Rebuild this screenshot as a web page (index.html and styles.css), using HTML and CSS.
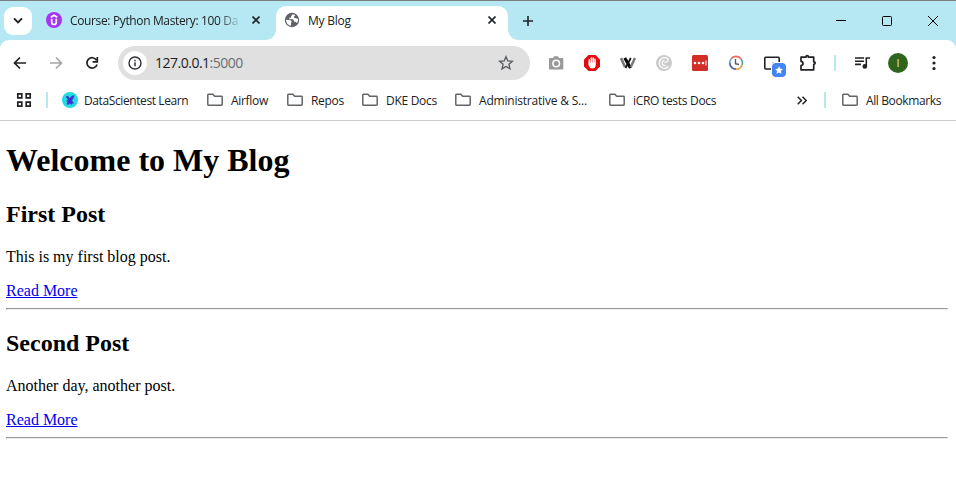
FILE: index.html
```html
<!DOCTYPE html>
<html lang="en">
<head>
<meta charset="utf-8">
<title>My Blog</title>
<link rel="stylesheet" href="styles.css">
</head>
<body>
<svg class="defs" width="0" height="0">
  <symbol id="folder" viewBox="0 0 16 14"><path d="M1.500 12.200q-.7 0-.7-.7v-9.500q0-.7.7-.7h4.300l1.900 2h6.800q.7 0 .7.7v7.500q0 .7-.7.7z" fill="none" stroke="#626568" stroke-width="1.500"/></symbol>
  <symbol id="close" viewBox="0 0 8 8"><path d="M.5.5l7 7M7.500.5l-7 7" stroke="#202429" stroke-width="1.600"/></symbol>
</svg>
<header class="chrome">
  <div class="tabstrip">
    <button class="search"><svg width="10" height="7" viewBox="0 0 10 7"><path d="M1 1.300l4 4 4-4" fill="none" stroke="#202124" stroke-width="1.900"/></svg></button>
    <div class="tab">
      <svg width="16" height="16" viewBox="0 0 16 16"><circle cx="8" cy="8" r="8" fill="#a435f0"/><path d="M4.800 5.200L8 3.200l3.200 2M5.700 6.700v3.500a2.300 2.300 0 0 0 4.600 0V6.700" fill="none" stroke="#fff" stroke-width="1.700"/></svg>
      <span class="title faded">Course: Python Mastery: 100 Da</span>
      <svg class="x" width="8" height="8"><use href="#close"/></svg>
    </div>
    <div class="tab active">
      <svg width="16" height="16" viewBox="0 0 16 16"><circle cx="8" cy="8" r="7.200" fill="#5f6368"/><path d="M8.500 2.300L7 4.400v1.300H5.300v1.500h3.500l1.200 1.500v1h1.500l1.600 1.200A6 6 0 0 0 14 7l-1.800-.8-2-.2V4.300l1.300-1.200zM2.100 7.800l4.500.4 1.200 1.500-.8 1.400v2.700A6 6 0 0 1 2.100 7.800z" fill="#fff"/></svg>
      <span class="title">My Blog</span>
      <svg class="x" width="8" height="8"><use href="#close"/></svg>
    </div>
    <svg class="plus" width="10" height="10" viewBox="0 0 10 10"><path d="M5 0v10M0 5h10" stroke="#202429" stroke-width="1.600"/></svg>
    <div class="controls">
      <svg width="10" height="10" viewBox="0 0 10 10"><path d="M0 4.500h10" stroke="#000"/></svg>
      <svg width="10" height="10" viewBox="0 0 10 10"><rect x=".5" y=".5" width="9" height="9" rx="1" fill="none" stroke="#000"/></svg>
      <svg width="10" height="10" viewBox="0 0 10 10"><path d="M0 0l10 10M10 0L0 10" stroke="#000"/></svg>
    </div>
  </div>
  <div class="toolbar">
    <span class="slot"><svg width="14" height="14" viewBox="0 0 14 14"><path d="M13 7H2M7 1.500L1.500 7 7 12.500" fill="none" stroke="#202124" stroke-width="1.700"/></svg></span>
    <span class="slot"><svg width="14" height="14" viewBox="0 0 14 14"><path d="M1 7h11M7 1.500L12.500 7 7 12.500" fill="none" stroke="#a3a5a8" stroke-width="1.600"/></svg></span>
    <span class="slot"><svg width="14" height="14" viewBox="0 0 14 14"><path d="M11.600 4.200A5.200 5.200 0 1 0 12.100 8.500" fill="none" stroke="#202124" stroke-width="1.700"/><path d="M12.300 1v4.900H7.600" fill="none" stroke="#202124" stroke-width="1.700"/></svg></span>
    <div class="omnibox">
      <span class="info"><svg width="14" height="14" viewBox="0 0 14 14"><circle cx="7" cy="7" r="6" fill="none" stroke="#303236" stroke-width="1.400"/><path d="M7 6.200v4M7 3.700v1.500" stroke="#303236" stroke-width="1.500"/></svg></span>
      <span class="url">127.0.0.1<span>:5000</span></span>
      <svg class="star" width="16" height="16" viewBox="0 0 16 16"><path d="M8 1.700l1.800 4.200 4.600.4-3.500 3 1.100 4.500L8 11.400l-4 2.400 1.100-4.500-3.500-3 4.600-.4z" fill="none" stroke="#55585c" stroke-width="1.300"/></svg>
    </div>
    <span class="slot"><svg width="16" height="16" viewBox="0 0 16 16"><path d="M1 4q0-1 1-1h3l1-1.700h4L11 3h3.300q1 0 1 1v9.500q0 1-1 1H2q-1 0-1-1z" fill="#999"/><circle cx="8.200" cy="8.500" r="3.300" fill="none" stroke="#fff" stroke-width="1.600"/></svg></span>
    <span class="slot"><svg width="18" height="18" viewBox="0 0 18 18"><path d="M5.500 1h7L17 5.500v7L12.500 17h-7L1 12.500v-7z" fill="#e30b0f"/><path d="M6.300 10V5.800M8.300 9V4M10.200 9V4M12 10V5.300" stroke="#fff" stroke-width="1.500" stroke-linecap="round"/><path d="M5.600 8.500h7.100v2.500q0 3.500-3.500 3.500-2.500 0-3.600-3z" fill="#fff"/></svg></span>
    <span class="slot"><svg width="16" height="12" viewBox="0 0 16 12"><path d="M1 1l4 9" stroke="#777" stroke-width="2.600"/><path d="M4.800 1l5.700 10" stroke="#000" stroke-width="3"/><path d="M10.800 1L5.500 11" stroke="#111" stroke-width="1.800"/><path d="M15 1l-4.200 9" stroke="#777" stroke-width="2.500"/></svg></span>
    <span class="slot"><svg width="16" height="16" viewBox="0 0 16 16"><circle cx="8" cy="8" r="8" fill="#cbcbcb"/><path d="M12.500 11.500a5.300 5.300 0 1 1-.5-7.500q.8 3-3.500 3.300M8.300 5.200q-2.500 1-2 3.400t3.500 2" fill="none" stroke="#fff" stroke-width="1.200"/></svg></span>
    <span class="slot"><svg width="16" height="16" viewBox="0 0 16 16"><rect width="16" height="16" rx="1.500" fill="#d32d27"/><g fill="#fff"><circle cx="3" cy="8" r="1.300"/><circle cx="7" cy="8" r="1.300"/><circle cx="11" cy="8" r="1.300"/><path d="M13.500 5.500h1v5h-1z"/></g></svg></span>
    <span class="slot"><svg width="16" height="16" viewBox="0 0 16 16" fill="none" stroke-width="1.700"><path d="M3 4A6.200 6.200 0 0 1 13 4" stroke="#ea6a5a"/><path d="M13 4a6.200 6.200 0 0 1 1 6" stroke="#58a891"/><path d="M14 10A6.200 6.200 0 0 1 8 14.200" stroke="#e9a03c"/><path d="M8 14.200A6.200 6.200 0 0 1 1.800 8" stroke="#4f5fa8"/><path d="M1.800 8A6.200 6.200 0 0 1 3 4" stroke="#6ca9df"/><path d="M7.500 4v4.700l3.500.8" stroke="#555" stroke-width="1.300"/></svg></span>
    <span class="slot cast"><svg width="16" height="14" viewBox="0 0 16 14"><rect x=".8" y="1.300" width="14.400" height="11.700" rx="1" fill="none" stroke="#202124" stroke-width="1.600"/><path d="M8 7h2" stroke="#777"/></svg><svg class="badge" width="14" height="14" viewBox="0 0 14 14"><rect width="14" height="14" rx="3" fill="#4285f4"/><path d="M7 3.200l1.200 2.600 2.800.3-2.100 1.900.6 2.800L7 9.400l-2.500 1.400.6-2.800L3 6.100l2.800-.3z" fill="#fff"/></svg></span>
    <span class="slot"><svg width="18" height="18" viewBox="0 0 18 18"><path d="M2 3.200h5q0-1.500 1.200-1.500t1.200 1.500h5.300v4.600q1.500 0 1.500 1.300t-1.500 1.300v5.400H2v-4.300q2-.3 2-2.100T2 7.300z" fill="none" stroke="#202124" stroke-width="1.700" stroke-linejoin="round"/></svg></span>
    <i class="rule"></i>
    <span class="slot"><svg width="16" height="14" viewBox="0 0 16 14"><path d="M1 2h9M1 5.200h9M1 8.400h6M12.300 10.500V2H16" fill="none" stroke="#202124" stroke-width="1.600"/><circle cx="10.800" cy="10.400" r="2.300" fill="#202124"/></svg></span>
    <span class="slot"><span class="avatar">I</span></span>
    <span class="slot"><svg width="4" height="16" viewBox="0 0 4 16" fill="#202124"><circle cx="2" cy="2.500" r="1.600"/><circle cx="2" cy="8" r="1.600"/><circle cx="2" cy="13.500" r="1.600"/></svg></span>
  </div>
  <nav class="bookmarks">
    <svg class="apps" width="16" height="16" viewBox="0 0 16 16"><path d="M1.800 1.800h4v4h-4zM10.200 1.800h4v4h-4zM1.800 10.200h4v4h-4zM10.200 10.200h4v4h-4z" fill="none" stroke="#202124" stroke-width="1.700"/></svg>
    <i class="rule"></i>
    <a class="mark first"><svg width="16" height="16" viewBox="0 0 16 16"><circle cx="8" cy="8" r="8" fill="#24dbe2"/><path d="M3.800 4.500l2-.8 1.700 2.500L9.500 4l2.800-.7-.8 3-1.500 2 2 3.500-2-.3-.5 1.700-1.500-2-1.200 1.500-2.300-.5 1.200-2.400L4 9.300l1.800-1.500z" fill="#4030d8"/></svg><span>DataScientest Learn</span></a>
    <a class="mark airflow"><svg width="16" height="14"><use href="#folder"/></svg><span>Airflow</span></a>
    <a class="mark repos"><svg width="16" height="14"><use href="#folder"/></svg><span>Repos</span></a>
    <a class="mark dke"><svg width="16" height="14"><use href="#folder"/></svg><span>DKE Docs</span></a>
    <a class="mark admin"><svg width="16" height="14"><use href="#folder"/></svg><span>Administrative &amp; S...</span></a>
    <a class="mark icro"><svg width="16" height="14"><use href="#folder"/></svg><span>iCRO tests Docs</span></a>
    <svg class="more" width="10" height="9" viewBox="0 0 10 9"><path d="M.7.8l3.700 3.700L.7 8.200M5.500.8l3.700 3.700-3.700 3.700" fill="none" stroke="#202124" stroke-width="1.500"/></svg>
    <i class="rule"></i>
    <a class="mark all"><svg width="16" height="14"><use href="#folder"/></svg><span>All Bookmarks</span></a>
  </nav>
</header>
<main class="page">
  <h1>Welcome to My Blog</h1>
  <h2>First Post</h2>
  <p>This is my first blog post.</p>
  <a href="#first">Read More</a>
  <hr>
  <h2>Second Post</h2>
  <p>Another day, another post.</p>
  <a href="#second">Read More</a>
  <hr>
</main>
</body>
</html>
```
FILE: styles.css
```css
body { margin: 0; background: #fff; overflow: hidden; }
.defs { display: none; }
.chrome {
  box-sizing: border-box;
  height: 121px;
  border-top: 1px solid #7b7f82;
  border-bottom: 1px solid #cbcbcb;
  background: #b5e8f3;
  font: 12px "Open Sans", "Noto Sans", sans-serif;
  color: #202124;
  white-space: nowrap;
}
.chrome svg { flex: none; display: block; }
.tabstrip { display: flex; align-items: center; height: 39px; }
.search {
  display: flex; align-items: center; justify-content: center;
  width: 28px; height: 28px; margin-left: 4px; padding: 0;
  border: 0; border-radius: 9px; background: #fff;
}
.tab {
  position: relative; box-sizing: border-box;
  display: flex; align-items: center;
  width: 230px; height: 34px; margin: 5px 0 0 10px; padding: 0 12px 6px 4px;
}
.tab.active { width: 232px; margin-left: 4px; padding-left: 8px; background: #fff; border-radius: 10px 10px 0 0; }
.tab.active::before, .tab.active::after {
  content: ""; position: absolute; bottom: 0; width: 10px; height: 10px;
}
.tab.active::before { left: -10px; background: radial-gradient(circle at 0 0, transparent 9.5px, #fff 10px); }
.tab.active::after { right: -10px; background: radial-gradient(circle at 100% 0, transparent 9.5px, #fff 10px); }
.title { margin-left: 8px; letter-spacing: -0.22px; }
.faded {
  width: 170px; letter-spacing: -0.36px;
  -webkit-mask-image: linear-gradient(to right, #000 148px, transparent 172px);
  mask-image: linear-gradient(to right, #000 148px, transparent 172px);
}
.x { margin-left: auto; }
.plus { margin-left: 15px; }
.controls { display: flex; gap: 36px; margin-left: auto; margin-right: 18px; }
.toolbar {
  display: flex; align-items: center; height: 46px;
  padding-left: 2px; background: #fff; border-radius: 9px 9px 0 0;
}
.slot { display: flex; align-items: center; justify-content: center; flex: none; width: 36px; height: 36px; }
.omnibox {
  box-sizing: border-box; display: flex; align-items: center;
  width: 412px; height: 34px; margin: 0 8px; padding: 0 16px 0 5px;
  border-radius: 17px; background: #e0e0e0;
}
.info {
  display: flex; align-items: center; justify-content: center;
  width: 24px; height: 24px; border-radius: 50%; background: #fff;
}
.url { margin-left: 8px; font-size: 14px; letter-spacing: -0.5px; position: relative; top: -1px; }
.url span { color: #6b6d70; }
.star { margin-left: auto; }
.cast { position: relative; }
.badge { position: absolute; left: 18px; top: 18px; outline: 1px solid #fff; border-radius: 3px; }
.rule { flex: none; width: 2px; height: 16px; margin: 0 8px; background: #b5e8f3; }
.avatar {
  width: 20px; height: 20px; border-radius: 50%;
  background: #2f641d; color: #dfe8dc; font-size: 11px; line-height: 20px; text-align: center;
}
.bookmarks { display: flex; align-items: center; height: 34px; padding: 0 0 6px 16px; box-sizing: border-box; background: #fff; }
.bookmarks .rule { margin: 0 14px; }
.bookmarks .more + .rule { margin: 0 16px 0 14px; }
.mark { display: flex; align-items: center; gap: 8px; flex: none; letter-spacing: -0.3px; }
.first { gap: 6px; width: 145px; letter-spacing: -0.4px; }
.airflow { width: 80px; }
.repos { width: 75px; }
.dke { width: 93px; }
.admin { width: 154px; letter-spacing: -0.2px; }
.more { margin-left: auto; margin-right: 3px; }
.all { width: 114px; letter-spacing: -0.38px; }
.page { padding: 0 8px 0 6px; font: 16px "Liberation Serif", "Times New Roman", serif; color: #000; display: flow-root; }
.page a { color: #0000ee; text-decoration: underline; }
```
